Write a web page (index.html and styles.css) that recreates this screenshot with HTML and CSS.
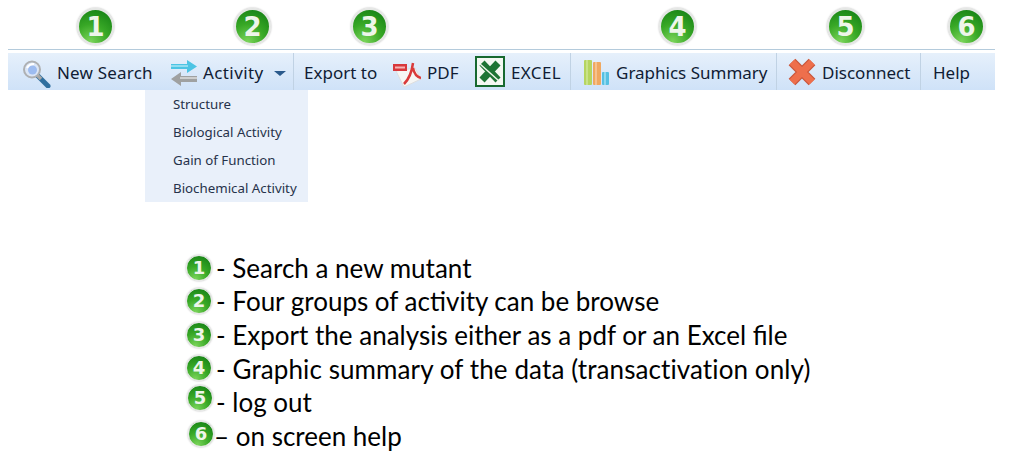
FILE: index.html
```html
<!DOCTYPE html>
<html>
  <head>
    <title>Toolbar help</title>
    <link rel="stylesheet" href="styles.css">
  </head>
  <body>
    <div class="markers">
      <span class="badge marker-1">1</span>
      <span class="badge marker-2">2</span>
      <span class="badge marker-3">3</span>
      <span class="badge marker-4">4</span>
      <span class="badge marker-5">5</span>
      <span class="badge marker-6">6</span>
    </div>

    <div class="toolbar">
      <div class="tool tool-search">
        <svg class="icon" width="28" height="32" viewBox="0 0 28 32">
          <path d="M15 20 L25 30" stroke="#2f6f9f" stroke-width="5" stroke-linecap="round"/>
          <path d="M14 19 L18 23" stroke="#a8a8a8" stroke-width="3.500"/>
          <circle cx="9" cy="13.500" r="8" fill="#dbe6f6" stroke="#aeb0b2" stroke-width="2"/>
          <circle cx="9.500" cy="14" r="4.500" fill="#9dbcf0"/>
          <path d="M4 12 Q6 8 11 8" stroke="#fff" stroke-width="2" fill="none"/>
        </svg>
        <span>New Search</span>
      </div>
      <div class="tool tool-activity">
        <svg class="icon" width="28" height="30" viewBox="0 0 28 30">
          <path d="M1 7 H17 V3 L27 9.500 L17 16 V12 H1 Z" fill="#4cc4e4"/>
          <path d="M1 9 H18" stroke="#a8e6f4" stroke-width="1.500"/>
          <path d="M27 19 H11 V15 L1 22 L11 29 V25 H27 Z" fill="#9fa1a1"/>
          <path d="M27 21 H10" stroke="#dcdede" stroke-width="1.500"/>
        </svg>
        <span>Activity</span>
        <i class="caret"></i>
      </div>
      <div class="tool tool-export">
        <span>Export to</span>
      </div>
      <div class="tool tool-pdf">
        <svg class="icon" width="29" height="32" viewBox="0 0 29 32">
          <path d="M4 15 L23 12 L29 23 L12 31 Z" fill="#f6f6f4" stroke="#dedede"/>
          <path d="M1 8 H15 V15 H1 Z" fill="#d8383c"/>
          <path d="M3 11.500 H13" stroke="#f6b6b6" stroke-width="2"/>
          <path d="M21 7 C20 15 17 23 12 28 M21 12 C22 17 25 21 29 22" stroke="#d93a3a" stroke-width="2.500" fill="none"/>
        </svg>
        <span>PDF</span>
      </div>
      <div class="tool tool-excel">
        <svg class="icon" width="30" height="31" viewBox="0 0 30 31">
          <rect x="1" y="1" width="28" height="29" fill="#f4f8f2" stroke="#17692f" stroke-width="2"/>
          <path d="M7 7 L23 24 M23 7 L7 24" stroke="#1d7434" stroke-width="7"/>
          <path d="M5 8 L24 25" stroke="#eef6ea" stroke-width="1.500"/>
        </svg>
        <span>EXCEL</span>
      </div>
      <div class="tool tool-graphics">
        <svg class="icon" width="27" height="29" viewBox="0 0 27 29">
          <rect x="1" y="3" width="8" height="25" rx="1" fill="#b5d560"/>
          <rect x="3" y="3" width="2" height="25" fill="#c9e288"/>
          <rect x="10" y="5" width="8" height="23" rx="1" fill="#f0a860"/>
          <rect x="12" y="5" width="2" height="23" fill="#f6c28e"/>
          <rect x="19" y="15" width="7" height="13" rx="1" fill="#56c0e2"/>
          <rect x="21" y="15" width="2" height="13" fill="#90d8ee"/>
        </svg>
        <span>Graphics Summary</span>
      </div>
      <div class="tool tool-disconnect">
        <svg class="icon" width="28" height="28" viewBox="0 0 28 28">
          <path d="M4 4 L24 24 M24 4 L4 24" stroke="#c8563c" stroke-width="9.500"/>
          <path d="M4 4 L24 24 M24 4 L4 24" stroke="#ee6f4c" stroke-width="7"/>
        </svg>
        <span>Disconnect</span>
      </div>
      <div class="tool tool-help">
        <span>Help</span>
      </div>

      <ul class="menu">
        <li>Structure</li>
        <li>Biological Activity</li>
        <li>Gain of Function</li>
        <li>Biochemical Activity</li>
      </ul>
    </div>

    <ul class="legend">
      <li><span class="badge small">1</span><span class="legend-text">- Search a new mutant</span></li>
      <li><span class="badge small">2</span><span class="legend-text">- Four groups of activity can be browse</span></li>
      <li><span class="badge small">3</span><span class="legend-text">- Export the analysis either as a pdf or an Excel file</span></li>
      <li class="row-4"><span class="badge small">4</span><span class="legend-text">- Graphic summary of the data (transactivation only)</span></li>
      <li class="row-5"><span class="badge small">5</span><span class="legend-text">- log out</span></li>
      <li class="row-6"><span class="badge small">6</span><span class="legend-text">– on screen help</span></li>
    </ul>
  </body>
</html>
```

FILE: styles.css
```css
body {
  margin: 0;
  background: #fff;
  font-family: "Noto Sans", sans-serif;
  color: #101c34;
}

.badge {
  display: flex;
  flex: none;
  align-items: center;
  justify-content: center;
  box-sizing: border-box;
  width: 37px;
  height: 37px;
  border: 2px solid #e4e6e4;
  border-radius: 50%;
  background: radial-gradient(circle at 35% 95%, #7ad45a 0, #38a826 45%, #0f7a12 100%);
  box-shadow: 0 0 2px #aaa;
  color: #eef5ea;
  font-family: "DejaVu Sans", sans-serif;
  font-size: 26px;
  font-weight: bold;
  line-height: 1;
}
.badge.small {
  width: 26px;
  height: 26px;
  border-width: 1px;
  font-size: 18px;
}

.markers {
  display: flex;
  height: 49px;
  padding: 8px 0 0 77px;
  box-sizing: border-box;
}
.marker-2 { margin-left: 120px; }
.marker-3 { margin-left: 80px; }
.marker-4 { margin-left: 271px; }
.marker-5 { margin-left: 131px; }
.marker-6 { margin-left: 84px; }

.toolbar {
  position: relative;
  display: flex;
  box-sizing: border-box;
  width: 987px;
  height: 41px;
  padding-top: 3px;
  margin-left: 8px;
  border-top: 1px solid #b4cbdc;
  background: linear-gradient(#fff 0, #fff 3px, #e6f0fb 3px, #cfe2f8 100%);
  font-size: 17px;
}
.tool {
  display: flex;
  flex: none;
  align-items: center;
  box-sizing: border-box;
  height: 37px;
  white-space: nowrap;
}
.tool span {
  margin-top: 2px;
}
.icon {
  flex: none;
}
.tool-search { width: 162px; padding-left: 15px; gap: 6px; letter-spacing: 0.2px; }
.tool-activity { width: 124px; gap: 5px; border-right: 1px solid #c0d2e4; letter-spacing: 0.4px; }
.tool-export { width: 98px; padding-left: 10px; }
.tool-pdf { width: 83px; gap: 6px; }
.tool-excel { width: 96px; gap: 6px; border-right: 1px solid #c0d2e4; letter-spacing: 0.4px; }
.tool-graphics { width: 206px; padding-left: 12px; gap: 6px; border-right: 1px solid #c0d2e4; }
.tool-disconnect { width: 144px; padding-left: 11px; gap: 6px; border-right: 1px solid #c0d2e4; }
.tool-help { padding-left: 12px; }

.caret {
  width: 0;
  height: 0;
  margin: 3px 0 0 5px;
  border-top: 5px solid #2a5a8c;
  border-left: 6.500px solid transparent;
  border-right: 6.500px solid transparent;
}

.menu {
  position: absolute;
  top: 40px;
  left: 137px;
  width: 163px;
  height: 112px;
  margin: 0;
  padding: 0 0 0 28px;
  box-sizing: border-box;
  list-style: none;
  background: #e9f0fa;
  color: #26324a;
  font-size: 13.300px;
}
.menu li {
  height: 28px;
  line-height: 28px;
  white-space: nowrap;
}

.legend {
  margin: 161px 0 0 186px;
  padding: 0;
  list-style: none;
  font-family: "Lato", sans-serif;
  font-size: 26px;
  color: #000;
}
.legend li {
  display: flex;
  align-items: center;
  height: 33.600px;
}
.legend-text {
  margin-left: 4px;
  white-space: nowrap;
}

/* the badges were placed by hand in the original, they drift a bit */
.row-4 .badge { margin-bottom: 2px; }
.row-4 .legend-text { letter-spacing: 0.1px; }
.row-5 .badge { margin: 0 0 8px 1px; }
.row-5 .legend-text { margin-left: 3px; }
.row-6 .badge { margin: 0 0 4px 2px; }
.row-6 .legend-text { margin-left: 0; }
```
